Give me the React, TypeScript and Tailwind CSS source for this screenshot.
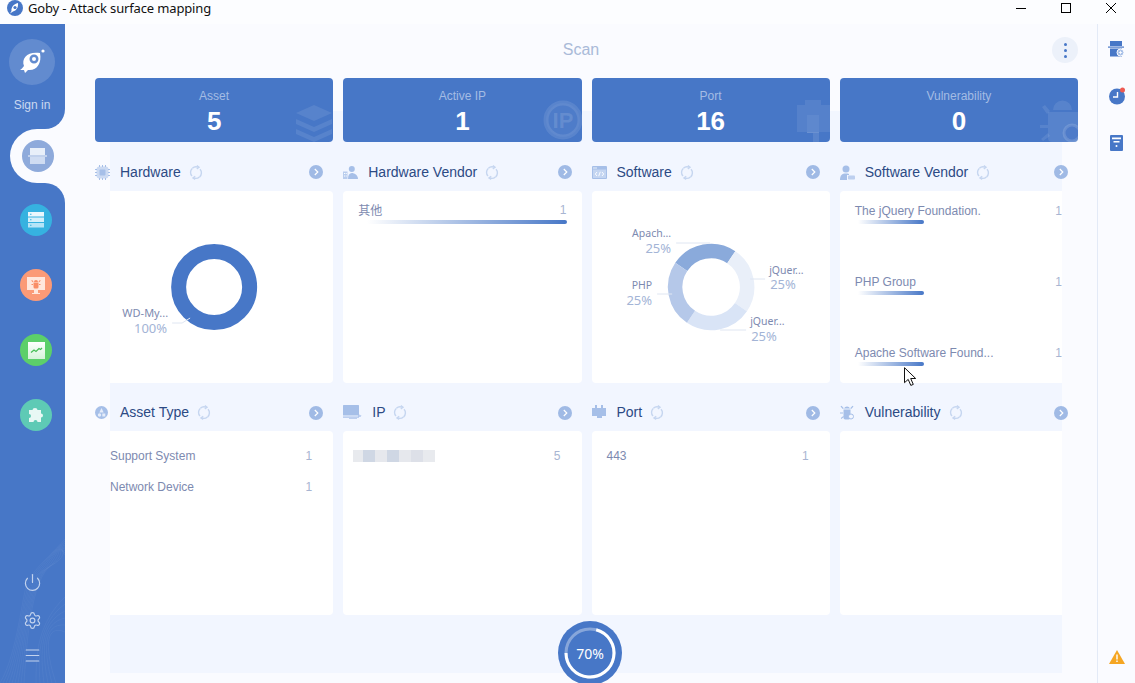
import type { ReactNode } from "react";
import { Power, Settings, Menu } from "lucide-react";

const chartFont = "font-['Noto_Sans','Open_Sans',sans-serif]";

function arc(cx: number, cy: number, r: number, from: number, to: number) {
  const p = (a: number) => {
    const t = ((a - 90) * Math.PI) / 180;
    return `${(cx + r * Math.cos(t)).toFixed(2)} ${(cy + r * Math.sin(t)).toFixed(2)}`;
  };
  return `M${p(from)} A${r} ${r} 0 ${to - from > 180 ? 1 : 0} 1 ${p(to)}`;
}

const stats = [
  { label: "Asset", value: "5", mark: "stack" },
  { label: "Active IP", value: "1", mark: "ip" },
  { label: "Port", value: "16", mark: "port" },
  { label: "Vulnerability", value: "0", mark: "bug" },
] as const;

function StatMark({ kind }: { kind: string }) {
  if (kind === "stack")
    return (
      <svg className="absolute bottom-0 right-0 h-[40px] w-[40px]" viewBox="0 0 40 40" fill="#fff" fillOpacity={0.09}>
        <path d="M21 3 39 11 21 19 3 11Z" />
        <path d="M3 17l18 8 18-8v5L21 30 3 22Z" />
        <path d="M3 27l18 8 18-8v5L21 40 3 32Z" />
      </svg>
    );
  if (kind === "ip")
    return (
      <svg className="absolute bottom-0 right-0 h-[50px] w-[44px]" viewBox="0 0 44 50">
        <circle cx="25" cy="28" r="17" fill="#fff" fillOpacity={0.04} stroke="#fff" strokeOpacity={0.1} strokeWidth="5" />
        <text x="25" y="36" textAnchor="middle" fontSize="22" fontWeight="700" fill="#fff" fillOpacity={0.13} className="font-['Liberation_Sans',Arial,sans-serif]">
          IP
        </text>
      </svg>
    );
  if (kind === "port")
    return (
      <svg className="absolute bottom-0 right-0 h-[44px] w-[36px]" viewBox="0 0 36 44" fill="#fff">
        <path fillOpacity={0.08} fillRule="evenodd" d="M11 2h16v5h9v27H3V7h8Zm2 15v18h12V17Z" />
        <rect x="13" y="17" width="12" height="18" fillOpacity={0.13} />
        <rect x="19" y="35" width="6" height="9" fillOpacity={0.1} />
      </svg>
    );
  return (
    <svg className="absolute bottom-0 right-0 h-[44px] w-[40px]" viewBox="0 0 40 44" fill="#fff" fillOpacity={0.09}>
      <path d="M15 12a9.500 9.500 0 0 1 19 0Z" />
      <path d="M10 14h30v30H14a4 4 0 0 1-4-4Z" />
      <path d="M4 9l3-2 5 6-3 3ZM2 27h8v3H2ZM3 41l7-6 2 3-7 5Z" />
      <circle cx="34" cy="35" r="8" fill="#4777c7" fillOpacity={0.6} stroke="#fff" strokeOpacity={0.14} strokeWidth="3" />
    </svg>
  );
}

function RefreshIcon() {
  return (
    <svg className="h-[15px] w-[14px] shrink-0" viewBox="0 0 14 15" fill="none" stroke="#c6d6f0" strokeWidth="1.4">
      <path d="M3.400 3.200A5.300 5.300 0 0 1 9 2.100M11 4.200a5.400 5.400 0 0 1-.4 7.700M10.400 12A5.300 5.300 0 0 1 5 13M3 11a5.400 5.400 0 0 1 .2-7.600" />
      <path d="M7.800.6 10 2.300 7.800 3.800M6.200 11.300 4 13l2.200 1.400" />
    </svg>
  );
}

function ArrowButton() {
  return (
    <span className="flex h-[14px] w-[14px] shrink-0 items-center justify-center rounded-full bg-[#a0bae5]">
      <svg className="h-[8px] w-[8px]" viewBox="0 0 8 8" fill="none" stroke="#fff" strokeWidth="1.2">
        <path d="M2.800 1 5.800 4 2.800 7" />
      </svg>
    </span>
  );
}

const hardwareIcon = (
  <svg className="h-[15px] w-[15px]" viewBox="0 0 15 15" fill="#a6bfe8">
    <rect x="1.500" y="1.500" width="12" height="12" rx="3" fillOpacity={0.55} />
    <rect x="4.500" y="4.500" width="6" height="6" rx="1" />
    <path d="M4 0h1v2H4Zm3 0h1v2H7Zm3 0h1v2h-1ZM4 13h1v2H4Zm3 0h1v2H7Zm3 0h1v2h-1ZM0 4h2v1H0Zm0 3h2v1H0Zm0 3h2v1H0ZM13 4h2v1h-2Zm0 3h2v1h-2Zm0 3h2v1h-2Z" />
  </svg>
);
const hardwareVendorIcon = (
  <svg className="h-[13px] w-[15px]" viewBox="0 0 15 13" fill="#a6bfe8">
    <circle cx="8.800" cy="3" r="3" />
    <path d="M5 13c0-4 1.500-6 3.800-6S15 9 15 13Z" />
    <path d="M0 5.500h4.500V13H0Z" fillOpacity={0.75} />
    <path d="M1 7h1v1H1Zm1.700 0h1v1h-1ZM1 9.500h1v1H1Zm1.700 0h1v1h-1Z" fill="#fff" />
  </svg>
);
const softwareIcon = (
  <svg className="h-[13px] w-[15px]" viewBox="0 0 15 13">
    <rect width="15" height="13" rx="1" fill="#a6bfe8" />
    <rect x="1" y="3.500" width="13" height="8.500" fill="#c4d5f1" />
    <path d="M1 1.500h4v1H1Z" fill="#e7eefa" />
    <path d="M5 6 3.300 8 5 10M10 6l1.700 2L10 10M8.300 5.800 6.700 10.200" fill="none" stroke="#fff" strokeWidth="0.9" />
  </svg>
);
const softwareVendorIcon = (
  <svg className="h-[15px] w-[15px]" viewBox="0 0 15 15" fill="#a6bfe8">
    <circle cx="6" cy="4" r="3.500" />
    <path d="M0 15c0-5 2-6.500 6-6.500 1 0 2 .1 3 .5v1H7v5Z" />
    <rect x="8" y="10.500" width="7" height="4" rx="0.800" fillOpacity={0.7} />
  </svg>
);
const assetTypeIcon = (
  <svg className="h-[13px] w-[13px]" viewBox="0 0 13 13">
    <circle cx="6.500" cy="6.500" r="6.500" fill="#a6bfe8" />
    <path d="M6.500 2 4.300 6.500h4.400Z" fill="#e6edfa" />
    <circle cx="4.500" cy="9" r="1.700" fill="#e6edfa" />
    <rect x="7.300" y="7.500" width="3" height="3" fill="#e6edfa" />
  </svg>
);
const ipIcon = (
  <svg className="h-[15px] w-[19px]" viewBox="0 0 19 15" fill="#a6bfe8">
    <rect width="16" height="10.500" rx="0.500" />
    <path d="M0 11.500h16v1.200H0Z" />
    <path d="M6 13h8v1H6Z" fillOpacity={0.7} />
    <path d="M15 9l3.500 1.500-1 1.500H15Z" fillOpacity={0.7} />
  </svg>
);
const portIcon = (
  <svg className="h-[15px] w-[14px]" viewBox="0 0 14 15" fill="#a6bfe8">
    <path d="M3 0h2v3h4V0h2v3h3v8h-4v2H5v-2H0V3h3Z" />
  </svg>
);
const vulnIcon = (
  <svg className="h-[15px] w-[15px]" viewBox="0 0 15 15" fill="#a6bfe8">
    <path d="M4 3.500a3.300 3.300 0 0 1 6 0Z" />
    <path d="M3.500 4.500h7v7a2.500 2.500 0 0 1-2 3h-3a2.500 2.500 0 0 1-2-3Z" />
    <path d="M.5 1.500 1.500.7l2.300 2.500-1 .8ZM0 7.500h3v1H0ZM.8 13l2.500-2 .6.8-2.500 2.100ZM12.500.7l1 .8-2.300 2.500-1-.8Z" />
    <circle cx="11" cy="11.500" r="2.500" fill="#f2f6ff" stroke="#a6bfe8" />
  </svg>
);

function PanelHeader({ icon, title, height = "h-[49px]", iconBox = "w-[25px]" }: { icon: ReactNode; title: string; height?: string; iconBox?: string }) {
  return (
    <div className={`flex items-center pr-[10px] pt-[11px] ${height}`}>
      <span className={`flex shrink-0 items-center ${iconBox}`}>{icon}</span>
      <span className="text-[14px] text-[#2c4a84]">{title}</span>
      <span className="ml-2">
        <RefreshIcon />
      </span>
      <span className="ml-auto">
        <ArrowButton />
      </span>
    </div>
  );
}

function Card({ h, edge, children }: { h: string; edge?: "left" | "right"; children?: ReactNode }) {
  const shape =
    edge === "left"
      ? "ml-[15px] rounded-r-[4px]"
      : edge === "right"
        ? "mr-[16px] rounded-l-[4px]"
        : "rounded-[4px]";
  return <div className={`overflow-hidden bg-white ${h} ${shape}`}>{children}</div>;
}

function Bar({ className }: { className: string }) {
  return <div className={`h-[4px] rounded-r-full bg-gradient-to-r from-[#4777c700] to-[#4777c7] ${className}`} />;
}

const vendors = ["The jQuery Foundation.", "PHP Group", "Apache Software Found..."];

function VendorList() {
  return (
    <div className="flex flex-col gap-[51px] pl-[15px] pt-[13px] text-[12px] leading-[14px] text-[#7d8ab0]">
      {vendors.map((v) => (
        <div key={v}>
          <div className="flex justify-between">
            <span>{v}</span>
            <span className="text-[#a8b5d2]">1</span>
          </div>
          <Bar className="ml-[3px] mt-[2px] w-[66px]" />
        </div>
      ))}
    </div>
  );
}

function ValueRow({ label, value }: { label: ReactNode; value: string }) {
  return (
    <div className="flex h-[31px] items-center justify-between text-[12px] text-[#7d8ab0]">
      <span>{label}</span>
      <span className="text-[#a8b5d2]">{value}</span>
    </div>
  );
}

const blurBlocks = ["w-[10px] bg-[#e8eaee]", "w-[12px] bg-[#cfd7e4]", "w-[12px] bg-[#e6e8ed]", "w-[12px] bg-[#cfd7e4]", "w-[12px] bg-[#e6e8ed]", "w-[12px] bg-[#dde0e8]", "w-[12px] bg-[#e8eaee]"];

function HardwareDonut() {
  return (
    <svg className="block h-full w-full" viewBox="110 191 223 192">
      <circle cx="214" cy="287" r="35.500" fill="none" stroke="#4777c7" strokeWidth="15" />
      <path d="M172 323h10l8-5" fill="none" stroke="#dfe6f2" />
      <text x="168" y="317" textAnchor="end" fontSize="11" fill="#7d8ab0" className={chartFont}>WD-My...</text>
      <text x="167" y="333" textAnchor="end" fontSize="13" fill="#a3b4d6" className={chartFont}>100%</text>
    </svg>
  );
}

const softwareSlices = [
  { from: -56, to: 34, color: "#8aaadb" },
  { from: 34, to: 124, color: "#e9eff9" },
  { from: 124, to: 214, color: "#d9e4f6" },
  { from: 214, to: 304, color: "#b5c8e9" },
];

function SoftwareDonut() {
  return (
    <svg className="block h-full w-full" viewBox="592 191 238 192">
      {softwareSlices.map((s) => (
        <path key={s.from} d={arc(711, 287, 36, s.from, s.to)} fill="none" stroke={s.color} strokeWidth="14.500" />
      ))}
      <g fill="none" stroke="#dfe6f2">
        <path d="M676 243h34" />
        <path d="M657 294h15" />
        <path d="M750 279h15" />
        <path d="M720 330h26" />
      </g>
      <g fontSize="10.500" fill="#7d8ab0" className={chartFont}>
        <text x="671" y="237" textAnchor="end">Apach...</text>
        <text x="652" y="289" textAnchor="end">PHP</text>
        <text x="769" y="274">jQuer...</text>
        <text x="750" y="325">jQuer...</text>
      </g>
      <g fontSize="13" fill="#a3b4d6" className={chartFont}>
        <text x="671" y="253" textAnchor="end">25%</text>
        <text x="652" y="305" textAnchor="end">25%</text>
        <text x="770" y="289">25%</text>
        <text x="751" y="341">25%</text>
      </g>
    </svg>
  );
}

function SideCircle({ color, children }: { color: string; children: ReactNode }) {
  return <span className={`flex h-[32px] w-[32px] items-center justify-center rounded-full ${color}`}>{children}</span>;
}

function Sidebar() {
  return (
    <aside className="relative flex w-[65px] shrink-0 flex-col overflow-hidden bg-[#4777c7]">
      {/* wave lines */}
      <svg className="absolute bottom-0 left-0 h-[150px] w-[65px]" viewBox="0 0 65 150" fill="none" stroke="#fff" strokeOpacity={0.06} strokeWidth="0.7">
        {[0, 1, 2, 3, 4, 5, 6, 7, 8].map((i) => (
          <path key={i} d={`M${i * 3} 150C${18 + i} 120 ${22 + i} ${60 - i * 2} ${28 + i * 3} ${48 - i * 2}S55 ${18 - i} 65 ${6 + i * 2}`} />
        ))}
        {[0, 1, 2, 3, 4, 5].map((i) => (
          <path key={i} d={`M${36 + i * 4} 150C${36 + i * 2} 120 ${38 + i} 90 65 ${64 + i * 7}`} />
        ))}
      </svg>

      <div className="relative flex w-[64px] flex-col items-center pt-[15px]">
        <span className="flex h-[46px] w-[46px] items-center justify-center rounded-full bg-white/15">
          <svg className="h-[28px] w-[28px]" viewBox="0 0 28 28">
            <path fill="#fff" fillRule="evenodd" d="M2 22c1.500-1 3-2.500 4-4C3 10 10 3 22 5c2 10-3 18-12 17l-3 3-1-3ZM16 6.500a4.500 4.500 0 1 0 0 9 4.500 4.500 0 0 0 0-9Z" />
            <circle cx="16" cy="11" r="2" fill="#fff" />
            <circle cx="25" cy="3" r="1.600" fill="#fff" />
          </svg>
        </span>
        <span className="mt-[13px] text-[12px] leading-[14px] text-[#cbd9f0]">Sign in</span>
      </div>

      {/* active item, with the two concave corners */}
      <div className="relative ml-[10px] mt-[17px] flex h-[54px] items-center justify-center rounded-l-[27px] bg-[#fafbff]">
        <span className="absolute -top-[20px] right-0 h-[20px] w-[20px] bg-[#fafbff]">
          <span className="block h-full w-full rounded-br-[20px] bg-[#4777c7]" />
        </span>
        <span className="absolute -bottom-[20px] right-0 h-[20px] w-[20px] bg-[#fafbff]">
          <span className="block h-full w-full rounded-tr-[20px] bg-[#4777c7]" />
        </span>
        <SideCircle color="bg-[#8eaadb]">
          <svg className="h-[16px] w-[19px]" viewBox="0 0 19 16">
            <rect x="2" y="0" width="15" height="7" fill="#e8eff9" />
            <rect x="0" y="7.500" width="19" height="1" fill="#f4f7fd" />
            <rect x="2" y="9" width="15" height="7" fill="#cfdcf2" />
          </svg>
        </SideCircle>
      </div>

      <div className="relative mt-[21px] flex flex-col gap-[33px] pl-[20px]">
        <SideCircle color="bg-[#36b2e0]">
          <svg className="h-[16px] w-[16px]" viewBox="0 0 16 16">
            <rect y="0" width="16" height="4.500" fill="#eaf7fd" />
            <rect y="5.500" width="16" height="4.500" fill="#d4f0fb" />
            <rect y="11" width="16" height="4.500" fill="#b5e4f7" />
            <path d="M2 1.700h1.500v1H2Zm0 5.500h1.500v1H2Zm0 5.500h1.500v1H2Z" fill="#36b2e0" />
          </svg>
        </SideCircle>
        <SideCircle color="bg-[#fb9a77]">
          <svg className="h-[17px] w-[18px]" viewBox="0 0 18 17">
            <rect width="18" height="13" fill="#ffe7dd" />
            <rect x="7" y="13" width="4" height="3" fill="#ffe7dd" />
            <rect x="5" y="16" width="8" height="1" fill="#ffe7dd" />
            <path d="M7 5a2 2 0 0 1 4 0ZM6.500 5.500h5v4.500a1.500 1.500 0 0 1-1.500 1.500H8a1.500 1.500 0 0 1-1.500-1.500ZM4.500 7h1.500v1H4.500Zm7.500 0h1.500v1H12ZM5 3l1.500 1.500-.7.7L4.300 3.700ZM13 3l-1.500 1.500.7.7 1.500-1.500Z" fill="#f98d66" />
          </svg>
        </SideCircle>
        <SideCircle color="bg-[#5ccf6a]">
          <svg className="h-[17px] w-[17px]" viewBox="0 0 17 17">
            <defs>
              <linearGradient id="chartFill" x1="0" y1="0" x2="0" y2="1">
                <stop offset="0" stopColor="#fff" />
                <stop offset="1" stopColor="#d5f3da" />
              </linearGradient>
            </defs>
            <rect width="17" height="17" fill="url(#chartFill)" />
            <path d="M3 10.500 6 8l2 1.500L11 6.500l1.500 1L14 6" fill="none" stroke="#47bf57" strokeWidth="1.3" />
          </svg>
        </SideCircle>
        <SideCircle color="bg-[#5ecab5]">
          <svg className="h-[16px] w-[16px]" viewBox="0 0 16 16">
            <path d="M1 3h3.500a2.500 2 0 0 1 5 0H13v3.500a2 2 0 0 1 0 4V15H9.500a2 2 0 0 0-4 0H1v-4a2 2 0 0 0 0-4Z" fill="#e8f8f4" />
          </svg>
        </SideCircle>
      </div>

      <div className="relative mt-auto flex flex-col items-center pb-[18px] pr-[1px] text-[#c3d3ee]">
        <Power size={19} strokeWidth={1.5} />
        <Settings size={19} strokeWidth={1.5} className="mt-[19px]" />
        <Menu size={19} strokeWidth={1.3} className="mt-[16px]" />
      </div>
    </aside>
  );
}

function RightRail() {
  return (
    <aside className="flex w-[38px] shrink-0 flex-col items-center border-l border-[#e3eaf7] pt-[17px]">
      <svg className="h-[16px] w-[17px]" viewBox="0 0 17 16">
        <rect x="2" y="0" width="12" height="5" fill="#4777c7" />
        <rect x="0" y="5.500" width="16" height="1.200" fill="#4777c7" />
        <rect x="2" y="7.500" width="12" height="8" fill="#4777c7" />
        <circle cx="12.500" cy="11.500" r="3.500" fill="#a6bfe8" stroke="#fff" />
        <path d="M12.500 9.800v3.400M10.800 11.500h3.400" stroke="#fff" strokeWidth="0.8" />
      </svg>
      <svg className="mt-[30px] h-[18px] w-[18px]" viewBox="0 0 18 18">
        <circle cx="9" cy="9.500" r="8" fill="#4777c7" />
        <path d="M9.500 5v5H5" fill="none" stroke="#fff" strokeWidth="1.4" />
        <circle cx="14.500" cy="3" r="2.500" fill="#ee5a52" />
      </svg>
      <svg className="mt-[30px] h-[16px] w-[13px]" viewBox="0 0 13 16">
        <rect width="13" height="16" rx="1" fill="#4777c7" />
        <path d="M2 2.500h9v1.800H2ZM3.500 6h6v1.500h-6Z" fill="#fff" />
        <circle cx="6.500" cy="11" r="1" fill="#fff" />
      </svg>
      <svg className="mb-[19px] mt-auto h-[14px] w-[16px]" viewBox="0 0 16 14">
        <path d="M8 0 16 14H0Z" fill="#f5a623" />
        <path d="M7.300 4.500h1.400v5H7.300ZM7.300 10.500h1.400V12H7.300Z" fill="#fff" />
      </svg>
    </aside>
  );
}

export default function App() {
  return (
    <div className="relative flex h-[683px] w-[1135px] flex-col overflow-hidden bg-[#fafbff] font-['Liberation_Sans',Arial,sans-serif]">
      {/* title bar */}
      <header className="flex h-[24px] shrink-0 items-start bg-[#fcfdff]">
        <svg className="ml-[7px] h-[16px] w-[16px]" viewBox="0 0 16 16">
          <circle cx="8" cy="8" r="8" fill="#4777c7" />
          <path d="M3 13.500 4.500 11C4 7.500 6.500 4 11 3c.5 4.500-1.500 7.500-5 8.500Z" fill="#fff" />
          <circle cx="8" cy="7.500" r="1.600" fill="#4777c7" />
        </svg>
        <span className="ml-[5px] font-['Noto_Sans',sans-serif] text-[13px] leading-[17px] tracking-[-0.15px] text-[#111]">
          Goby - Attack surface mapping
        </span>
        <svg className="ml-auto h-[16px] w-[111px]" viewBox="0 0 111 16" fill="none" stroke="#000">
          <path d="M0 8.500h10" />
          <rect x="45.500" y="3.500" width="9" height="9" />
          <path d="M90 3l10 10M100 3 90 13" />
        </svg>
        <span className="w-[8px] shrink-0" />
      </header>

      <div className="flex min-h-0 flex-1">
        <Sidebar />

        <main className="flex min-w-0 flex-1 flex-col">
          <div className="grid h-[54px] shrink-0 grid-cols-[26px_1fr_26px] items-start px-[19px] pt-[13px]">
            <span />
            <h1 className="pt-[4px] text-center text-[16px] font-normal leading-[18px] text-[#a9bad8]">Scan</h1>
            <button type="button" className="flex h-[26px] w-[26px] flex-col items-center justify-center gap-[3px] rounded-full bg-[#ecf1fa]">
              <span className="h-[3px] w-[3px] rounded-full bg-[#4777c7]" />
              <span className="h-[3px] w-[3px] rounded-full bg-[#4777c7]" />
              <span className="h-[3px] w-[3px] rounded-full bg-[#4777c7]" />
            </button>
          </div>

          <div className="flex-1 pl-[45px] pr-[35px]">
            <div className="relative z-10 -ml-[15px] -mr-[16px] grid grid-cols-4 gap-x-[10px]">
              {stats.map((s) => (
                <div key={s.label} className="relative flex h-[64px] flex-col items-center overflow-hidden rounded-[4px] bg-[#4777c7] pt-[11px]">
                  <span className="text-[12px] leading-[14px] text-[#a4bce4]">{s.label}</span>
                  <span className="mt-[3px] text-[26px] font-bold leading-[30px] text-white">{s.value}</span>
                  <StatMark kind={s.mark} />
                </div>
              ))}
            </div>

            <section className="-mt-[31px] h-[562px] bg-[#f2f6ff] pt-[31px]">
              <div className="-ml-[15px] -mr-[16px] grid grid-cols-4 gap-x-[10px]">
                <div>
                  <PanelHeader icon={hardwareIcon} title="Hardware" />
                  <Card h="h-[192px]" edge="left">
                    <HardwareDonut />
                  </Card>
                </div>
                <div>
                  <PanelHeader icon={hardwareVendorIcon} title="Hardware Vendor" />
                  <Card h="h-[192px]">
                    <div className="px-[15px] pt-[12px] text-[12px] leading-[14px] text-[#7d8ab0]">
                      <div className="flex justify-between">
                        <span className="font-['Noto_Sans_CJK_SC',sans-serif]">其他</span>
                        <span className="text-[#a8b5d2]">1</span>
                      </div>
                      <Bar className="ml-[9px] mt-[3px]" />
                    </div>
                  </Card>
                </div>
                <div>
                  <PanelHeader icon={softwareIcon} title="Software" />
                  <Card h="h-[192px]">
                    <SoftwareDonut />
                  </Card>
                </div>
                <div>
                  <PanelHeader icon={softwareVendorIcon} title="Software Vendor" />
                  <Card h="h-[192px]" edge="right">
                    <VendorList />
                  </Card>
                </div>

                <div>
                  <PanelHeader icon={assetTypeIcon} title="Asset Type" height="h-[48px]" />
                  <Card h="h-[184px]" edge="left">
                    <div className="pr-[21px] pt-[9px]">
                      <ValueRow label="Support System" value="1" />
                      <ValueRow label="Network Device" value="1" />
                    </div>
                  </Card>
                </div>
                <div>
                  <PanelHeader icon={ipIcon} title="IP" height="h-[48px]" iconBox="w-[29px]" />
                  <Card h="h-[184px]">
                    <div className="pl-[10px] pr-[21px] pt-[9px]">
                      <ValueRow
                        label={
                          <span className="flex h-[12px]">
                            {blurBlocks.map((c, i) => (
                              <span key={i} className={`h-full ${c}`} />
                            ))}
                          </span>
                        }
                        value="5"
                      />
                    </div>
                  </Card>
                </div>
                <div>
                  <PanelHeader icon={portIcon} title="Port" height="h-[48px]" />
                  <Card h="h-[184px]">
                    <div className="pl-[15px] pr-[21px] pt-[9px]">
                      <ValueRow label="443" value="1" />
                    </div>
                  </Card>
                </div>
                <div>
                  <PanelHeader icon={vulnIcon} title="Vulnerability" height="h-[48px]" />
                  <Card h="h-[184px]" edge="right" />
                </div>
              </div>

              <div className="relative z-10 mt-[6px] flex justify-center pl-[8px]">
                <div className="relative flex h-[64px] w-[64px] items-center justify-center rounded-full bg-[#4777c7]">
                  <svg className="absolute inset-0" width="64" height="64" viewBox="0 0 64 64" fill="none" strokeWidth="3">
                    <circle cx="32" cy="32" r="24" stroke="#fff" strokeOpacity={0.35} />
                    <path d={arc(32, 32, 24, 15, 270)} stroke="#fff" />
                  </svg>
                  <span className={`relative text-[14px] text-white ${chartFont}`}>70%</span>
                </div>
              </div>
            </section>
          </div>
        </main>

        <RightRail />
      </div>

      {/* mouse pointer */}
      <svg className="absolute left-[904px] top-[367px] h-[20px] w-[14px]" viewBox="0 0 14 20">
        <path d="M.5.700v15l3.700-3.300 2.600 6 2.500-1-2.600-5.900h5Z" fill="#fff" stroke="#111" strokeWidth="1" />
      </svg>
    </div>
  );
}
